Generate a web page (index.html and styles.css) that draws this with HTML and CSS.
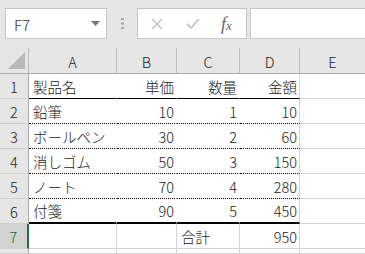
FILE: index.html
```html
<!DOCTYPE html>
<html>
    <head>
        <meta charset="utf-8">
        <title>Book1</title>
        <link rel="stylesheet" href="styles.css">
    </head>
    <body>
        <div class="toolbar">
            <div class="namebox">
                <span>F7</span>
                <svg class="drop" width="9" height="5" viewBox="0 0 9 5"><path d="M0 0h9L4.5 5z" fill="#777"/></svg>
            </div>
            <div class="grip">
                <svg width="3" height="11" viewBox="0 0 3 11"><path d="M0 0h3v2H0zM0 4.5h3v2H0zM0 9h3v2H0z" fill="#a8a8a8"/></svg>
            </div>
            <div class="fxbuttons">
                <svg class="cancel" width="12" height="12" viewBox="0 0 12 12"><path d="M1 1l10 10M11 1L1 11" stroke="#c4c4c4" stroke-width="1.6"/></svg>
                <svg class="enter" width="14" height="11" viewBox="0 0 14 11"><path d="M1 6l4 4L13 1" stroke="#c4c4c4" stroke-width="1.8" fill="none"/></svg>
                <span class="fx">f<small>x</small></span>
            </div>
            <div class="formula"></div>
        </div>

        <div class="sheet">
            <div class="corner"><svg width="17" height="17" viewBox="0 0 17 17"><path d="M0 17H17V0z" fill="#b9b9b9"/></svg></div>
            <div class="colhead">A</div>
            <div class="colhead">B</div>
            <div class="colhead">C</div>
            <div class="colhead">D</div>
            <div class="colhead last">E</div>

            <div class="rowhead">1</div>
            <div class="cell box solid">製品名</div>
            <div class="cell box solid num">単価</div>
            <div class="cell box solid num">数量</div>
            <div class="cell box solid num edge">金額</div>
            <div class="cell last"></div>

            <div class="rowhead">2</div>
            <div class="cell box dotted">鉛筆</div>
            <div class="cell box dotted num">10</div>
            <div class="cell box dotted num">1</div>
            <div class="cell box dotted num edge">10</div>
            <div class="cell last"></div>

            <div class="rowhead">3</div>
            <div class="cell box dotted">ボールペン</div>
            <div class="cell box dotted num">30</div>
            <div class="cell box dotted num">2</div>
            <div class="cell box dotted num edge">60</div>
            <div class="cell last"></div>

            <div class="rowhead">4</div>
            <div class="cell box dotted">消しゴム</div>
            <div class="cell box dotted num">50</div>
            <div class="cell box dotted num">3</div>
            <div class="cell box dotted num edge">150</div>
            <div class="cell last"></div>

            <div class="rowhead">5</div>
            <div class="cell box dotted">ノート</div>
            <div class="cell box dotted num">70</div>
            <div class="cell box dotted num">4</div>
            <div class="cell box dotted num edge">280</div>
            <div class="cell last"></div>

            <div class="rowhead">6</div>
            <div class="cell box thick">付箋</div>
            <div class="cell box thick num">90</div>
            <div class="cell box thick num">5</div>
            <div class="cell box thick num edge">450</div>
            <div class="cell last"></div>

            <div class="rowhead active">7</div>
            <div class="cell"></div>
            <div class="cell"></div>
            <div class="cell">合計</div>
            <div class="cell num">950</div>
            <div class="cell last"></div>

            <!-- row 8 only peeks in at the bottom edge -->
            <div class="rowhead"></div>
            <div class="cell"></div>
            <div class="cell"></div>
            <div class="cell"></div>
            <div class="cell"></div>
            <div class="cell last"></div>
        </div>
    </body>
</html>
```

FILE: styles.css
```css
body {
    margin: 0;
    width: 365px;
    height: 254px;
    overflow: hidden;
    background: #fff;
    font-family: "Noto Sans CJK JP", "Noto Sans", sans-serif;
    font-weight: 300;
    color: #222;
}

/* name box + formula bar */
.toolbar {
    display: flex;
    align-items: flex-start;
    height: 48px;
    padding: 8px 0 0 5px;
    box-sizing: border-box;
    background: #e6e6e6;
}
.namebox {
    display: flex;
    align-items: center;
    justify-content: space-between;
    width: 102px;
    height: 31px;
    box-sizing: border-box;
    padding: 0 6px 0 8px;
    background: #fff;
    border: 1px solid #c6c6c6;
    font-size: 15px;
    color: #333;
}
.namebox span {
    position: relative;
    top: 1px;
}
.grip {
    display: flex;
    justify-content: center;
    width: 30px;
    padding-top: 10px;
}
.fxbuttons {
    display: flex;
    align-items: center;
    width: 110px;
    height: 31px;
    box-sizing: border-box;
    padding-left: 13px;
    background: #fff;
    border: 1px solid #c6c6c6;
}
.fxbuttons .enter {
    margin-left: 23px;
}
.fx {
    margin-left: 21px;
    font-family: "Liberation Serif", serif;
    font-style: italic;
    font-weight: 400;
    font-size: 18px;
    line-height: 1;
    color: #666;
}
.fx small {
    font-size: 13px;
}
.formula {
    flex: 1;
    height: 31px;
    margin-left: 3px;
    margin-right: -2px;
    box-sizing: border-box;
    background: #fff;
    border: 1px solid #c6c6c6;
}

/* worksheet grid */
.sheet {
    display: grid;
    grid-template-columns: 29px 88px 60px 63px 60px 1fr;
    grid-template-rows: 26px repeat(7, 25px) 5px;
    font-size: 14.5px;
}
.sheet > div {
    box-sizing: border-box;
    display: flex;
    align-items: center;
    white-space: nowrap;
}
.corner {
    background: #e6e6e6;
    border-right: 1px solid #bdbdbd;
    border-bottom: 1px solid #ababab;
    align-items: flex-end !important;
    justify-content: flex-end;
    padding: 0 3px 4px 0;
}
.colhead {
    justify-content: center;
    background: #e6e6e6;
    border-right: 1px solid #bdbdbd;
    border-bottom: 1px solid #ababab;
    color: #222;
    padding-top: 2px;
}
.colhead.last {
    border-right: none;
}
.rowhead {
    justify-content: center;
    background: #e6e6e6;
    border-right: 1px solid #ababab;
    border-bottom: 1px solid #d0d0d0;
    color: #222;
}
.rowhead.active {
    background: #d2d2d2;
    color: #2e5a42;
    border-right: 2px solid #217346;
}
.cell {
    padding: 0 4px;
    border-right: 1px solid #d4d4d4;
    border-bottom: 1px solid #d4d4d4;
}
.cell.last {
    border-right: none;
}
.cell.num {
    justify-content: flex-end;
    padding-right: 2px;
}

/* bordered table block A1:D6 (white fill hides the gridlines) */
.cell.box {
    background: #fff;
    border-right-color: #fff;
}
.cell.box.edge {
    border-right-color: #d4d4d4;
}
.cell.solid {
    border-bottom: 1px solid #000;
}
.cell.dotted {
    border-bottom: 1px dotted #000;
}
.cell.thick {
    border-bottom: 2px solid #000;
}
```
